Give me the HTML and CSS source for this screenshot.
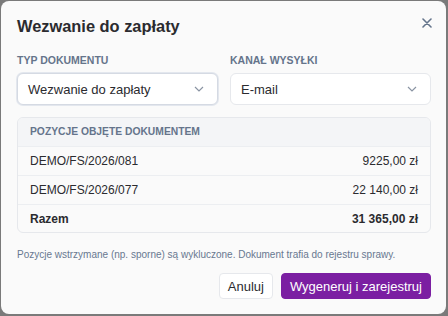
FILE: index.html
```html
<!DOCTYPE html>
<html lang="pl">
<head>
    <meta charset="UTF-8">
    <meta name="viewport" content="width=device-width, initial-scale=1.0">
    <title>Wezwanie do zapłaty</title>
    <link rel="stylesheet" href="styles.css">
</head>
<body>
    <div class="dialog">
        <header class="dialog-head">
            <h2>Wezwanie do zapłaty</h2>
            <button class="close" type="button" aria-label="Zamknij">
                <svg width="10" height="10" viewBox="0 0 10 10"><path d="M1 1L9 9M9 1L1 9" stroke="currentColor" stroke-width="1.6" stroke-linecap="round"/></svg>
            </button>
        </header>

        <div class="fields">
            <div class="field">
                <label>Typ dokumentu</label>
                <div class="select focused">
                    <span>Wezwanie do zapłaty</span>
                    <svg width="10" height="6" viewBox="0 0 10 6"><path d="M1 1l4 4 4-4" fill="none" stroke="currentColor" stroke-width="1.2"/></svg>
                </div>
            </div>
            <div class="field">
                <label>Kanał wysyłki</label>
                <div class="select">
                    <span>E-mail</span>
                    <svg width="10" height="6" viewBox="0 0 10 6"><path d="M1 1l4 4 4-4" fill="none" stroke="currentColor" stroke-width="1.2"/></svg>
                </div>
            </div>
        </div>

        <div class="items">
            <div class="items-head">Pozycje objęte dokumentem</div>
            <div class="row"><span>DEMO/FS/2026/081</span><span>9225,00 zł</span></div>
            <div class="row"><span>DEMO/FS/2026/077</span><span>22 140,00 zł</span></div>
            <div class="row total"><span>Razem</span><span>31 365,00 zł</span></div>
        </div>

        <p class="note">Pozycje wstrzymane (np. sporne) są wykluczone. Dokument trafia do rejestru sprawy.</p>

        <div class="actions">
            <button type="button" class="btn">Anuluj</button>
            <button type="button" class="btn primary">Wygeneruj i zarejestruj</button>
        </div>
    </div>
</body>
</html>
```

FILE: styles.css
```css
body {
    margin: 0;
    padding: 1px 2px 2px 1px;
    background-color: #7a7a7a;
    font-family: 'Liberation Sans', Arial, sans-serif;
    color: #2b2b2f;
    box-sizing: border-box;
    height: 316px;
    overflow: hidden;
}

.dialog {
    height: 313px;
    box-sizing: border-box;
    background-color: #fafafa;
    border-radius: 8px;
    padding: 0 15px 0 16px;
}

.dialog-head {
    display: flex;
    justify-content: space-between;
    align-items: center;
    height: 48px;
}

.dialog-head h2 {
    margin: 2px 0 0;
    font-size: 16.4px;
    font-weight: 700;
    color: #2b2b2f;
}

.close {
    border: none;
    background: none;
    padding: 0;
    width: 10px;
    height: 10px;
    color: #64748b;
    display: flex;
    margin-top: -5px;
    margin-right: -1px;
}

.fields {
    display: grid;
    grid-template-columns: 1fr 1fr;
    gap: 12px;
}

.field label {
    display: block;
    font-size: 10.5px;
    font-weight: 700;
    text-transform: uppercase;
    color: #65748b;
    margin-top: 5px;
    margin-bottom: 7px;
}

.select {
    height: 32px;
    box-sizing: border-box;
    display: flex;
    justify-content: space-between;
    align-items: center;
    padding: 0 13px 0 10px;
    background: #fff;
    border: 1px solid #e6e8ec;
    border-radius: 6px;
    font-size: 13px;
    color: #2b2b2f;
}

.select svg {
    color: #8a94a3;
}

.select.focused {
    border-color: #d5dae3;
    box-shadow: 0 0 0 1px #e3e7ee;
}

.items {
    margin-top: 12px;
    border: 1px solid #e6e8ec;
    border-radius: 6px;
    overflow: hidden;
}

.items-head {
    height: 28px;
    line-height: 28px;
    padding: 0 12px;
    background-color: #f4f5f7;
    font-size: 10.3px;
    font-weight: 700;
    text-transform: uppercase;
    color: #65748b;
}

.row {
    display: flex;
    justify-content: space-between;
    align-items: center;
    height: 29px;
    box-sizing: border-box;
    padding: 0 12px;
    border-top: 1px solid #eceef1;
    font-size: 12px;
    color: #2b2b2f;
}

.row.total {
    font-weight: 700;
    height: 28px;
}

.note {
    margin: 16px 0 0;
    font-size: 10px;
    color: #687890;
}

.actions {
    display: flex;
    justify-content: flex-end;
    gap: 8px;
    margin-top: 13px;
}

.btn {
    height: 26px;
    padding: 0 8px;
    border: 1px solid #e6e8ec;
    border-radius: 4px;
    background: #fff;
    font-family: inherit;
    font-size: 13px;
    color: #2b2b2f;
}

.btn.primary {
    background-color: #7b1fa2;
    border-color: #7b1fa2;
    color: #fff;
    padding: 0 8px;
}
```
